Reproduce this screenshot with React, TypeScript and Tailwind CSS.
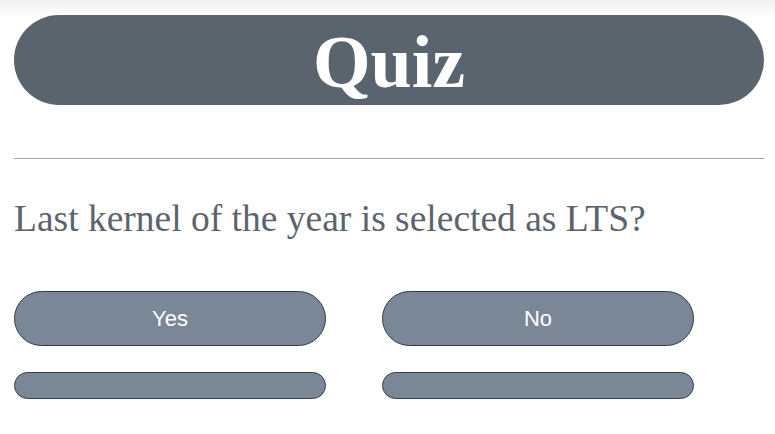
import React from 'react';

const App = () => {
  const answers = ['Yes', 'No'];

  return (
    <div className="min-h-screen bg-[linear-gradient(#f1f1f1,#ffffff_18px)] pl-[14px] pr-[11px] pt-[15px]">
      {/* Header */}
      <div className="h-[90px] rounded-full bg-[#5a646e] flex items-center justify-center pt-[4px]">
        <h1 className="text-white font-bold text-[74px] leading-none font-['Liberation_Serif',serif]">
          Quiz
        </h1>
      </div>

      <hr className="mt-[53px] border-0 border-t border-[#a3a3a3]" />

      {/* Question */}
      <p className="mt-[38px] text-[37.5px] leading-[44px] text-[#5b646e] font-['Liberation_Serif',serif]">
        Last kernel of the year is selected as LTS?
      </p>

      {/* Answers */}
      <div className="mt-[50px] grid grid-cols-[312px_312px] grid-rows-[55px_27px] gap-x-[56px] gap-y-[26px]">
        {answers.map((a) => (
          <button
            key={a}
            className="rounded-full bg-[#7a8797] border border-[#333c48] text-white text-[22px] font-['Liberation_Sans',Arial,sans-serif]"
          >
            {a}
          </button>
        ))}
        <button className="rounded-full bg-[#7a8797] border border-[#333c48]" />
        <button className="rounded-full bg-[#7a8797] border border-[#333c48]" />
      </div>
    </div>
  );
};

export default App;
